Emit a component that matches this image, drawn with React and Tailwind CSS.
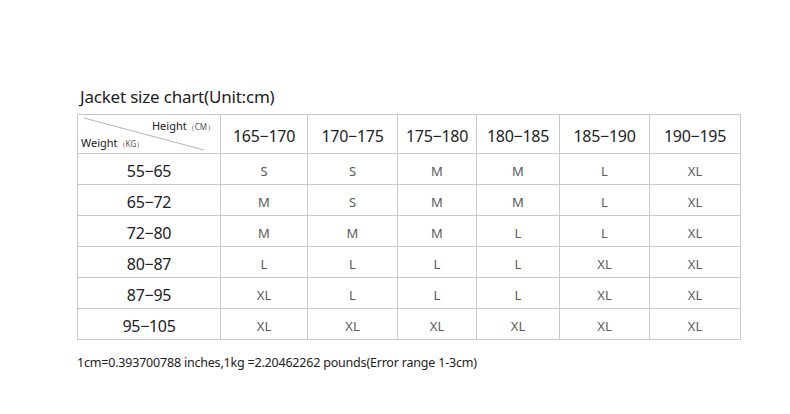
const HEIGHTS = ['165−170', '170−175', '175−180', '180−185', '185−190', '190−195']
const WIDTHS = [87, 90, 79, 83, 90, 91]

const ROWS = [
  { w: '55−65', s: ['S', 'S', 'M', 'M', 'L', 'XL'] },
  { w: '65−72', s: ['M', 'S', 'M', 'M', 'L', 'XL'] },
  { w: '72−80', s: ['M', 'M', 'M', 'L', 'L', 'XL'] },
  { w: '80−87', s: ['L', 'L', 'L', 'L', 'XL', 'XL'] },
  { w: '87−95', s: ['XL', 'L', 'L', 'L', 'XL', 'XL'] },
  { w: '95−105', s: ['XL', 'XL', 'XL', 'XL', 'XL', 'XL'] },
]

export default function App() {
  return (
    <div className="w-[790px] h-[414px] bg-white overflow-hidden" style={{ fontFamily: '"Noto Sans", "Open Sans", sans-serif' }}>
      <div className="pt-[85px] pl-[77px]">
        <h1 className="pl-[3px] text-[17px] leading-[24px] text-[#222] tracking-[-0.2px]">Jacket size chart(Unit:cm)</h1>

        <table className="mt-[5px] border-collapse table-fixed w-[664px]">
          <colgroup>
            <col className="w-[143px]" />
            {WIDTHS.map((w, i) => (
              <col key={i} style={{ width: w }} />
            ))}
          </colgroup>
          <thead>
            <tr className="h-[39px]">
              <th className="relative border border-[#c9c9c9] p-0 font-normal">
                <svg className="absolute inset-0" width="143" height="39">
                  <line x1="6" y1="3" x2="126" y2="35" stroke="#b5b5b5" strokeWidth="1" />
                </svg>
                <div className="absolute right-[5px] top-[4px] text-[11px] leading-[14px] text-[#222]">
                  Height<span className="text-[8px] text-[#555]">（CM）</span>
                </div>
                <div className="absolute left-[3px] top-[21px] text-[11px] leading-[14px] text-[#222]">
                  Weight<span className="text-[8px] text-[#555]">（KG）</span>
                </div>
              </th>
              {HEIGHTS.map(h => (
                <th key={h} className="border border-[#c9c9c9] p-0 pt-[4px] font-normal text-[16px] text-[#222] text-center tracking-[-0.3px]">{h}</th>
              ))}
            </tr>
          </thead>
          <tbody>
            {ROWS.map(r => (
              <tr key={r.w} className="h-[31px]">
                <td className="border border-[#c9c9c9] p-0 pt-[3px] text-center text-[16px] text-[#222] tracking-[-0.3px]">{r.w}</td>
                {r.s.map((s, i) => (
                  <td key={i} className="border border-[#c9c9c9] p-0 pt-[5px] text-center text-[13px] text-[#5c5c5c]">{s}</td>
                ))}
              </tr>
            ))}
          </tbody>
        </table>

        <p className="mt-[14px] text-[12.5px] leading-[18px] text-[#222] tracking-[-0.2px]">
          1cm=0.393700788 inches,1kg =2.20462262 pounds(Error range 1-3cm)
        </p>
      </div>
    </div>
  )
}
